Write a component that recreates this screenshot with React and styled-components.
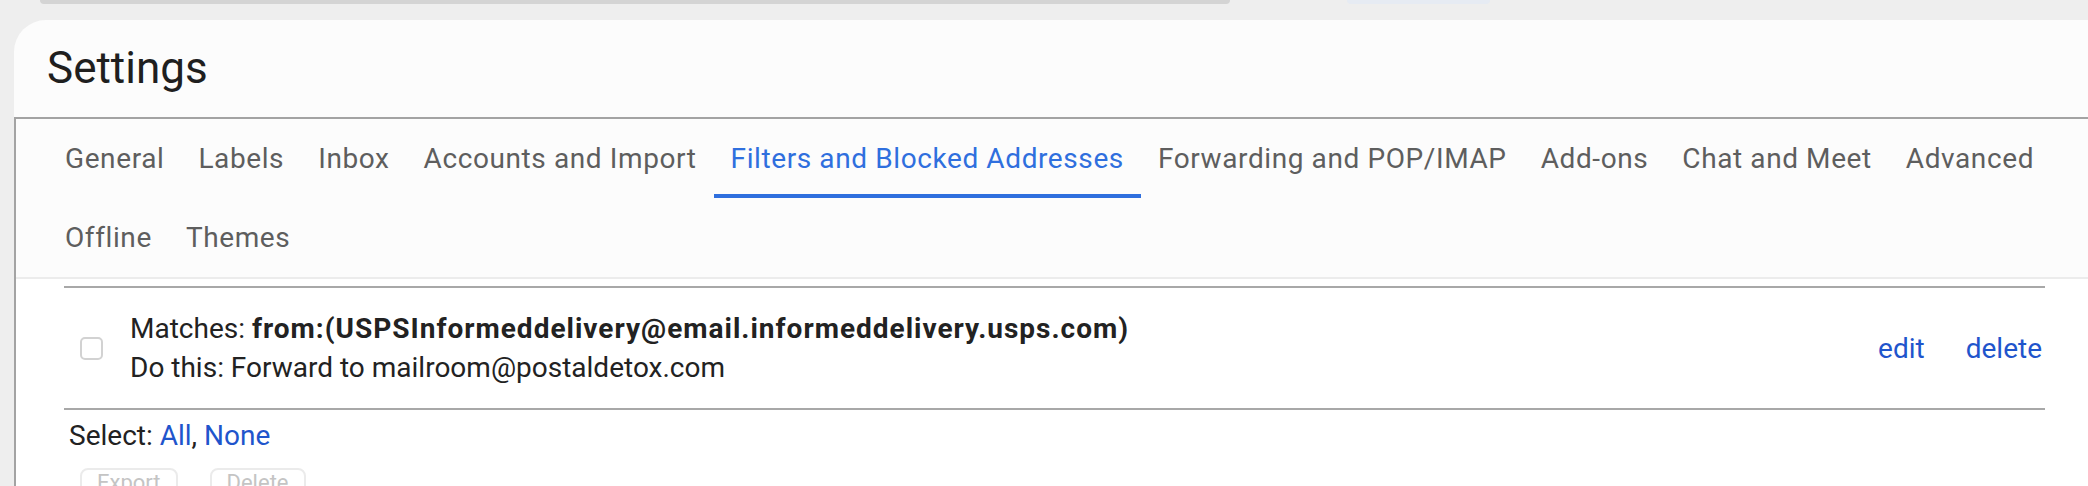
import React from 'react';
import styled, { createGlobalStyle } from 'styled-components';

const GlobalStyle = createGlobalStyle`
  html, body {
    margin: 0;
    padding: 0;
    background: #eeeeee;
    font-family: Roboto, "Liberation Sans", Arial, sans-serif;
    overflow: hidden;
  }
`;

const Page = styled.div`
  width: 2088px;
  height: 486px;
  overflow: hidden;
`;

const TopBar = styled.div`
  display: flex;
  height: 20px;
  padding-left: 40px;
`;

const SearchStub = styled.div`
  width: 1190px;
  height: 4px;
  background: #d4d4d4;
  border-radius: 0 0 28px 28px;
`;

const AppsStub = styled.div`
  width: 143px;
  height: 4px;
  margin-left: 117px;
  background: #e6ebf3;
  border-radius: 0 0 12px 12px;
`;

const Card = styled.div`
  margin-left: 14px;
  background: #fcfcfc;
  border-top-left-radius: 32px;
`;

const Header = styled.div`
  height: 97px;
  box-sizing: border-box;
  padding: 22px 0 0 33px;
`;

const Title = styled.h1`
  margin: 0;
  font-family: Roboto, "Open Sans", sans-serif;
  font-size: 44px;
  font-weight: 400;
  line-height: 52px;
  color: #1f1f1f;
`;

const Content = styled.div`
  border-top: 2px solid #a3a3a3;
  border-left: 2px solid #a3a3a3;
  background: #ffffff;
`;

const TabBar = styled.nav`
  display: flex;
  flex-wrap: wrap;
  padding: 0 20px 0 32px;
  background: #fcfcfc;
  border-bottom: 2px solid #ececec;
`;

const Tab = styled.div`
  height: 79px;
  padding: 0 17px;
  font-size: 28px;
  line-height: 79px;
  letter-spacing: 0.6px;
  white-space: nowrap;
  color: ${({ $active }) => ($active ? '#2f6fde' : '#5e5e5e')};
  box-shadow: ${({ $active }) => ($active ? 'inset 0 -4px 0 #2f6fde' : 'none')};
`;

const FilterList = styled.div`
  margin: 7px 43px 0 48px;
  border-top: 2px solid #a8a8a8;
  border-bottom: 2px solid #a8a8a8;
`;

const FilterRow = styled.div`
  display: flex;
  align-items: center;
  height: 120px;
  padding: 0 3px 0 16px;
  font-size: 28px;
  line-height: 39px;
  color: #222222;
`;

const Checkbox = styled.span`
  flex: none;
  width: 19px;
  height: 19px;
  border: 2px solid #d2d2d2;
  border-radius: 5px;
  background: #fff;
  margin-right: 27px;
`;

const Rule = styled.div`
  flex: 1;
  display: flex;
  flex-direction: column;

  b {
    letter-spacing: 1px;
  }
`;

const Actions = styled.div`
  display: flex;
  gap: 41px;
`;

const Link = styled.a`
  color: #1f55cc;
  text-decoration: none;
  cursor: pointer;
`;

const SelectLine = styled.div`
  margin: 6px 0 0 53px;
  font-size: 28px;
  line-height: 39px;
  color: #222222;
`;

const ButtonRow = styled.div`
  display: flex;
  gap: 32px;
  margin: 13px 0 0 64px;
`;

const GhostButton = styled.button`
  padding: 2px 15px 20px;
  background: #fff;
  border: 2px solid #ebebeb;
  border-radius: 8px;
  font-family: Roboto, sans-serif;
  font-size: 22px;
  line-height: 22px;
  color: #c4c4c4;
`;

const tabs = [
  'General',
  'Labels',
  'Inbox',
  'Accounts and Import',
  'Filters and Blocked Addresses',
  'Forwarding and POP/IMAP',
  'Add-ons',
  'Chat and Meet',
  'Advanced',
  'Offline',
  'Themes',
];

export default function App() {
  return (
    <Page>
      <GlobalStyle />
      <TopBar>
        <SearchStub />
        <AppsStub />
      </TopBar>
      <Card>
        <Header>
          <Title>Settings</Title>
        </Header>
        <Content>
          <TabBar>
            {tabs.map(t => (
              <Tab key={t} $active={t === 'Filters and Blocked Addresses'}>
                {t}
              </Tab>
            ))}
          </TabBar>
          <FilterList>
            <FilterRow>
              <Checkbox />
              <Rule>
                <span>
                  Matches: <b>from:(USPSInformeddelivery@email.informeddelivery.usps.com)</b>
                </span>
                <span>Do this: Forward to mailroom@postaldetox.com</span>
              </Rule>
              <Actions>
                <Link>edit</Link>
                <Link>delete</Link>
              </Actions>
            </FilterRow>
          </FilterList>
          <SelectLine>
            Select: <Link>All</Link>, <Link>None</Link>
          </SelectLine>
          <ButtonRow>
            <GhostButton>Export</GhostButton>
            <GhostButton>Delete</GhostButton>
          </ButtonRow>
        </Content>
      </Card>
    </Page>
  );
}
